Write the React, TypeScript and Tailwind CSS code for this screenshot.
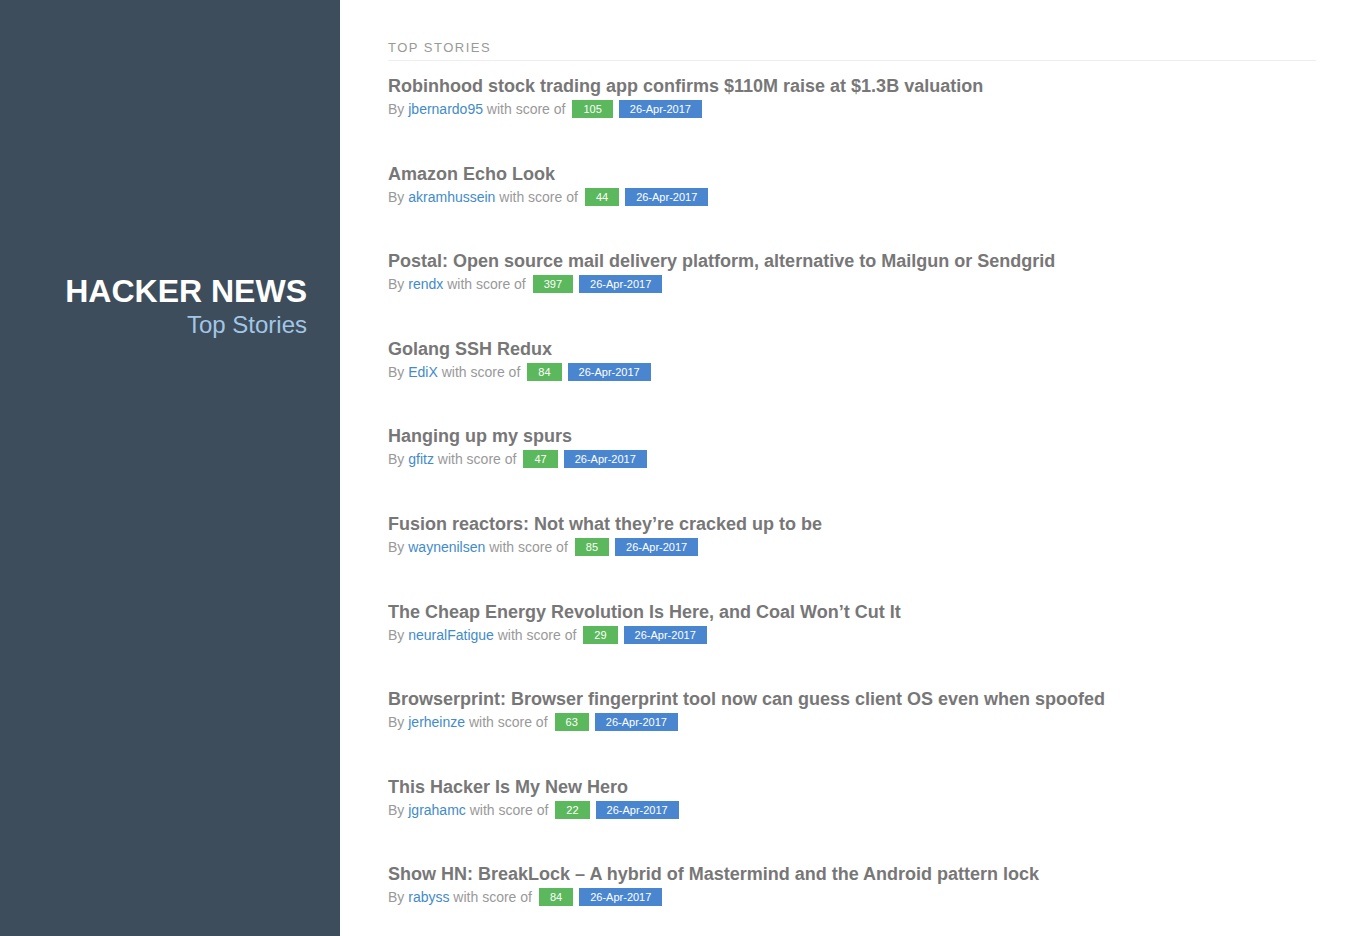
const stories = [
  { title: "Robinhood stock trading app confirms $110M raise at $1.3B valuation", by: "jbernardo95", score: 105 },
  { title: "Amazon Echo Look", by: "akramhussein", score: 44 },
  { title: "Postal: Open source mail delivery platform, alternative to Mailgun or Sendgrid", by: "rendx", score: 397 },
  { title: "Golang SSH Redux", by: "EdiX", score: 84 },
  { title: "Hanging up my spurs", by: "gfitz", score: 47 },
  { title: "Fusion reactors: Not what they\u2019re cracked up to be", by: "waynenilsen", score: 85 },
  { title: "The Cheap Energy Revolution Is Here, and Coal Won\u2019t Cut It", by: "neuralFatigue", score: 29 },
  { title: "Browserprint: Browser fingerprint tool now can guess client OS even when spoofed", by: "jerheinze", score: 63 },
  { title: "This Hacker Is My New Hero", by: "jgrahamc", score: 22 },
  { title: "Show HN: BreakLock \u2013 A hybrid of Mastermind and the Android pattern lock", by: "rabyss", score: 84 },
];

const App = () => {
  return (
    <div className="flex min-h-[936px] bg-white font-['Liberation_Sans',Arial,sans-serif]">
      {/* Sidebar */}
      <div className="w-[340px] shrink-0 bg-[#3d4d5b] pt-[272px] pr-[33px] text-right">
        <h1 className="text-[32px] font-bold leading-[38px] text-white">HACKER NEWS</h1>
        <div className="mt-[1px] text-[24px] leading-[28px] text-[#a3c6e6]">Top Stories</div>
      </div>

      {/* Stories */}
      <div className="flex-1 pt-[39px] pl-12 pr-[31px]">
        <div className="border-b border-[#eeeeee] pb-[3px] text-[13px] leading-[18px] tracking-[1.5px] text-[#999]">
          TOP STORIES
        </div>
        <ul className="pt-[14px]">
          {stories.map((s) => (
            <li key={s.title} className="mb-[43.6px]">
              <a href="#" className="block text-[18px] font-bold leading-[22px] text-[#777]">
                {s.title}
              </a>
              <div className="mt-[2px] flex items-center text-[14px] leading-[20px] text-[#999]">
                <span>
                  By <a href="#" className="text-[#428bca]">{s.by}</a> with score of
                </span>
                <span className="ml-[7px] inline-flex h-[18px] items-center bg-[#5cb85c] px-[11px] text-[11px] text-white">
                  {s.score}
                </span>
                <span className="ml-[6px] inline-flex h-[18px] items-center bg-[#4a86cf] px-[11px] text-[11px] text-white">
                  26-Apr-2017
                </span>
              </div>
            </li>
          ))}
        </ul>
      </div>
    </div>
  );
};

export default App;
